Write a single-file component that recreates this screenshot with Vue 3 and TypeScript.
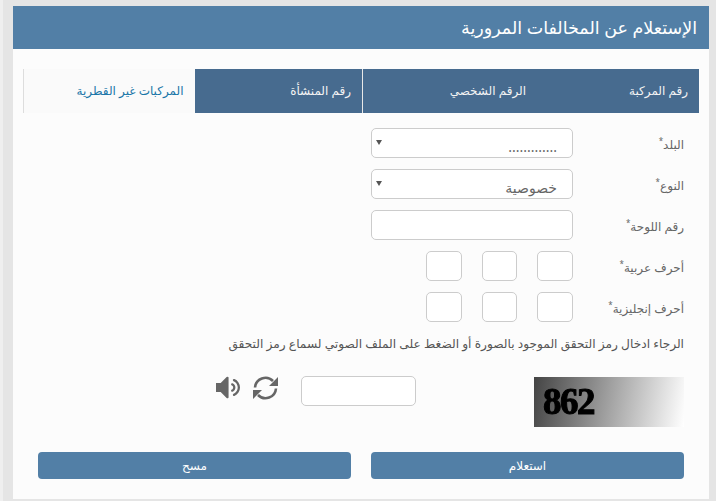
<template>
  <div class="page">
    <div class="panel" dir="rtl">
      <h1 class="panel-title">الإستعلام عن المخالفات المرورية</h1>

      <div class="tabs">
        <div
          v-for="tab in tabs"
          :key="tab.label"
          :class="['tab', { active: tab.active, divided: tab.divided }]"
          :style="{ width: tab.width + 'px' }"
        >
          {{ tab.label }}
        </div>
      </div>

      <form class="form" @submit.prevent>
        <div class="row">
          <label>البلد<sup>*</sup></label>
          <div class="select-wrap">
            <select class="field dots">
              <option>.............</option>
            </select>
            <span class="arrow"></span>
          </div>
        </div>
        <div class="row">
          <label>النوع<sup>*</sup></label>
          <div class="select-wrap">
            <select class="field">
              <option>خصوصية</option>
            </select>
            <span class="arrow"></span>
          </div>
        </div>
        <div class="row">
          <label>رقم اللوحة<sup>*</sup></label>
          <input class="field" type="text" />
        </div>
        <div class="row">
          <label>أحرف عربية<sup>*</sup></label>
          <div class="letters">
            <input v-for="n in 3" :key="n" class="letter" type="text" maxlength="1" />
          </div>
        </div>
        <div class="row">
          <label>أحرف إنجليزية<sup>*</sup></label>
          <div class="letters">
            <input v-for="n in 3" :key="n" class="letter" type="text" maxlength="1" />
          </div>
        </div>

        <p class="hint">الرجاء ادخال رمز التحقق الموجود بالصورة أو الضغط على الملف الصوتي لسماع رمز التحقق</p>

        <div class="captcha-row">
          <div class="captcha" dir="ltr"><span>862</span></div>
          <input class="captcha-input" type="text" />
          <div class="captcha-tools">
            <svg class="refresh" viewBox="0 0 25 24">
              <path d="M2 11.5A10.5 10.5 0 0 1 20 5M23 12.5A10.5 10.5 0 0 1 5 19" fill="none" stroke="#666" stroke-width="2.6" />
              <path d="M25 1v9h-9zM0 23v-9h9z" fill="#666" />
            </svg>
            <svg class="speaker" viewBox="128 288 1344 1216" fill="#666">
              <path d="M832 352v1088q0 26-19 45t-45 19-45-19l-333-333h-262q-26 0-45-19t-19-45v-384q0-26 19-45t45-19h262l333-333q19-19 45-19t45 19 19 45zm384 544q0 76-42.5 141.5t-112.5 93.5q-10 5-25 5-26 0-45-18.5t-19-45.5q0-21 12-35.5t29-25 34-23 29-36 12-56.5-12-56.5-29-36-34-23-29-25-12-35.5q0-27 19-45.5t45-18.5q15 0 25 5 70 27 112.5 93t42.5 142zm256 0q0 153-85 282.5t-225 188.5q-13 5-25 5-27 0-46-19t-19-45q0-39 39-59 56-29 76-44 74-54 115.5-135.5t41.5-173.5-41.5-173.5-115.5-135.5q-20-15-76-44-39-20-39-59 0-26 19-45t45-19q13 0 26 5 140 59 225 188.5t85 282.5z" />
            </svg>
          </div>
        </div>

        <div class="actions">
          <button type="submit" class="btn">استعلام</button>
          <button type="reset" class="btn">مسح</button>
        </div>
      </form>
    </div>
  </div>
</template>

<script setup lang="ts">
interface Tab {
  label: string
  width: number
  active?: boolean
  divided?: boolean
}

const tabs: Tab[] = [
  { label: 'رقم المركبة', width: 162 },
  { label: 'الرقم الشخصي', width: 175, divided: true },
  { label: 'رقم المنشأة', width: 167.5 },
  { label: 'المركبات غير القطرية', width: 171.5, active: true }
]
</script>

<style scoped>
.page {
  width: 716px;
  height: 501px;
  box-sizing: border-box;
  padding: 6px 7px 2px 10px;
  background: #e5e5e5;
  border-left: 3px solid;
  border-image: linear-gradient(90deg, #efefef 66%, #c9c9c9 66%) 1;
  font-family: "Noto Sans", "DejaVu Sans", "Liberation Sans", sans-serif;
  overflow: hidden;
}

.panel {
  height: 100%;
  background: #fcfcfc;
}

.panel-title {
  margin: 0;
  height: 43px;
  padding: 0 12px;
  line-height: 43px;
  background: #527fa6;
  color: #fff;
  font-size: 17.5px;
  font-weight: 400;
}

.tabs {
  display: flex;
  margin: 20px 10px 15px 10px;
  height: 44px;
}

.tab {
  box-sizing: border-box;
  padding-right: 11px;
  line-height: 44px;
  background: #476b8f;
  color: #f4f4f4;
  font-size: 12px;
}

.tab.divided {
  border-left: 1px solid #e8e8e8;
}

.tab.active {
  background: #fafafa;
  color: #1a76a8;
  border-left: 1px solid #ddd;
}

.form {
  padding: 0 25px;
}

.row {
  display: flex;
  align-items: center;
  height: 30px;
  margin-bottom: 11px;
}

.row label {
  width: 111px;
  padding-top: 2px;
  font-size: 12px;
  color: #666;
}

.row sup {
  font-size: 8px;
  line-height: 0;
}

.select-wrap {
  position: relative;
  width: 202px;
  height: 30px;
}

.field {
  box-sizing: border-box;
  display: block;
  width: 202px;
  height: 30px;
  padding: 6px 15px 0 10px;
  border: 1px solid #ccc;
  border-radius: 5px;
  background: #fff;
  color: #666;
  font-family: inherit;
  font-size: 14px;
  appearance: none;
  outline: none;
}

.arrow {
  position: absolute;
  top: 12px;
  left: 5px;
  border-left: 3px solid transparent;
  border-right: 3px solid transparent;
  border-top: 5px solid #555;
}

.letters {
  display: flex;
  gap: 20px;
}

.letter {
  box-sizing: border-box;
  width: 35.67px;
  height: 30px;
  border: 1px solid #ccc;
  border-radius: 5px;
  background: #fff;
  outline: none;
}

.hint {
  margin: 0;
  height: 40px;
  padding-top: 2px;
  box-sizing: border-box;
  font-size: 12.2px;
  line-height: 18px;
  color: #555;
}

.captcha-row {
  display: flex;
  align-items: flex-start;
  height: 76px;
  margin-top: 3px;
}

.captcha {
  box-sizing: border-box;
  width: 150px;
  height: 50px;
  margin-top: 1px;
  padding-left: 9px;
  background: linear-gradient(100deg, #444, #fff);
  color: #000;
  font-family: "Liberation Serif", serif;
  font-size: 37px;
  font-weight: 700;
  line-height: 50px;
  letter-spacing: -1.5px;
}

.captcha span {
  display: inline-block;
  -webkit-text-stroke: 1px #000;
  filter: blur(0.5px);
}

.captcha-input {
  box-sizing: border-box;
  width: 115px;
  height: 30px;
  margin-right: 118px;
  border: 1px solid #ccc;
  border-radius: 5px;
  background: #fff;
  outline: none;
}

.captcha-tools {
  display: flex;
  gap: 13px;
  margin-right: 23px;
}

.refresh {
  width: 25px;
  height: 24px;
}

.speaker {
  width: 24px;
  height: 23px;
}

.actions {
  display: grid;
  grid-template-columns: 313px 313px;
  gap: 20px;
}

.btn {
  height: 27px;
  padding: 0;
  border: none;
  border-radius: 4px;
  background: #527fa6;
  color: #fff;
  font-family: inherit;
  font-size: 12px;
}
</style>
